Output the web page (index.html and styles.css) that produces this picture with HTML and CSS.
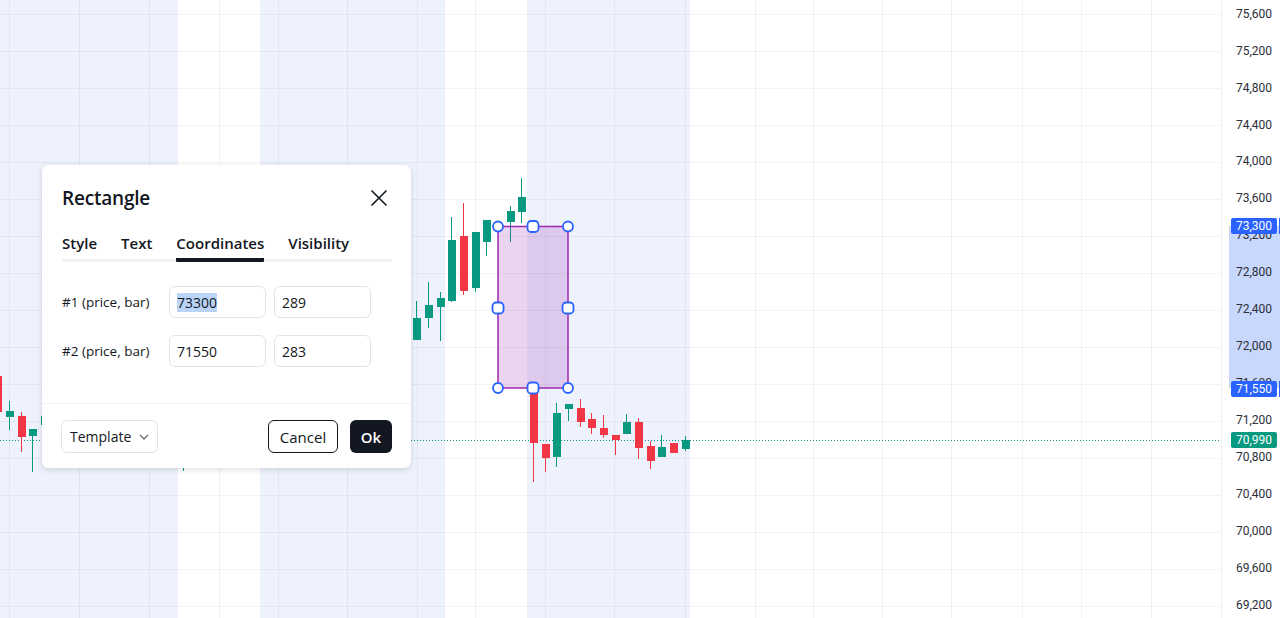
FILE: index.html
```html
<!DOCTYPE html>
<html>
<head>
<meta charset="utf-8">
<link rel="stylesheet" href="styles.css">
</head>
<body>
<div class="app">
  <div class="pane">
    <svg class="chart" width="1221" height="618" viewBox="0 0 1221 618">
      <g class="bands">
        <rect x="0" y="0" width="178" height="618"/>
        <rect x="260" y="0" width="185" height="618"/>
        <rect x="527" y="0" width="163" height="618"/>
      </g>
      <g class="grid">
        <line x1="9.5" y1="0" x2="9.5" y2="618"/>
        <line x1="79.5" y1="0" x2="79.5" y2="618"/>
        <line x1="149.5" y1="0" x2="149.5" y2="618"/>
        <line x1="219.5" y1="0" x2="219.5" y2="618"/>
        <line x1="278.5" y1="0" x2="278.5" y2="618"/>
        <line x1="347.5" y1="0" x2="347.5" y2="618"/>
        <line x1="417.5" y1="0" x2="417.5" y2="618"/>
        <line x1="475.5" y1="0" x2="475.5" y2="618"/>
        <line x1="545.5" y1="0" x2="545.5" y2="618"/>
        <line x1="614.5" y1="0" x2="614.5" y2="618"/>
        <line x1="685.5" y1="0" x2="685.5" y2="618"/>
        <line x1="755.5" y1="0" x2="755.5" y2="618"/>
        <line x1="813.5" y1="0" x2="813.5" y2="618"/>
        <line x1="882.5" y1="0" x2="882.5" y2="618"/>
        <line x1="951.5" y1="0" x2="951.5" y2="618"/>
        <line x1="1022.5" y1="0" x2="1022.5" y2="618"/>
        <line x1="1081.5" y1="0" x2="1081.5" y2="618"/>
        <line x1="1151.5" y1="0" x2="1151.5" y2="618"/>
        <line x1="0" y1="14.5" x2="1221" y2="14.5"/>
        <line x1="0" y1="51.5" x2="1221" y2="51.5"/>
        <line x1="0" y1="88.5" x2="1221" y2="88.5"/>
        <line x1="0" y1="125.5" x2="1221" y2="125.5"/>
        <line x1="0" y1="162.5" x2="1221" y2="162.5"/>
        <line x1="0" y1="199.5" x2="1221" y2="199.5"/>
        <line x1="0" y1="236.5" x2="1221" y2="236.5"/>
        <line x1="0" y1="273.5" x2="1221" y2="273.5"/>
        <line x1="0" y1="310.5" x2="1221" y2="310.5"/>
        <line x1="0" y1="347.5" x2="1221" y2="347.5"/>
        <line x1="0" y1="384.5" x2="1221" y2="384.5"/>
        <line x1="0" y1="421.5" x2="1221" y2="421.5"/>
        <line x1="0" y1="458.5" x2="1221" y2="458.5"/>
        <line x1="0" y1="495.5" x2="1221" y2="495.5"/>
        <line x1="0" y1="532.5" x2="1221" y2="532.5"/>
        <line x1="0" y1="569.5" x2="1221" y2="569.5"/>
        <line x1="0" y1="606.5" x2="1221" y2="606.5"/>
      </g>
      <line class="last-price" x1="0" y1="440.5" x2="1221" y2="440.5"/>
      <g class="up">
        <line x1="9.5" y1="401" x2="9.5" y2="430"/><rect x="6" y="411" width="8" height="6"/>
        <line x1="32.5" y1="429" x2="32.5" y2="472"/><rect x="29" y="429" width="8" height="7"/>
        <line x1="44.5" y1="410" x2="44.5" y2="430"/><rect x="41" y="416" width="8" height="9"/>
        <line x1="183.5" y1="450" x2="183.5" y2="471"/><rect x="180" y="440" width="8" height="14"/>
        <line x1="416.5" y1="301" x2="416.5" y2="340"/><rect x="413" y="318" width="8" height="22"/>
        <line x1="428.5" y1="282" x2="428.5" y2="328"/><rect x="425" y="305" width="8" height="13"/>
        <line x1="440.5" y1="292" x2="440.5" y2="341"/><rect x="437" y="298" width="8" height="9"/>
        <line x1="451.5" y1="217" x2="451.5" y2="302"/><rect x="448" y="240" width="8" height="61"/>
        <line x1="475.5" y1="232" x2="475.5" y2="292"/><rect x="472" y="232" width="8" height="56"/>
        <line x1="486.5" y1="220" x2="486.5" y2="256"/><rect x="483" y="220" width="8" height="22"/>
        <line x1="510.5" y1="206" x2="510.5" y2="242"/><rect x="507" y="211" width="8" height="11"/>
        <line x1="521.5" y1="178" x2="521.5" y2="223"/><rect x="518" y="197" width="8" height="15"/>
        <line x1="556.5" y1="403" x2="556.5" y2="467"/><rect x="553" y="413" width="8" height="44"/>
        <line x1="568.5" y1="404" x2="568.5" y2="421"/><rect x="565" y="404" width="8" height="5"/>
        <line x1="626.5" y1="414" x2="626.5" y2="434"/><rect x="623" y="422" width="8" height="12"/>
        <line x1="661.5" y1="435" x2="661.5" y2="457"/><rect x="658" y="447" width="8" height="10"/>
        <line x1="685.5" y1="436" x2="685.5" y2="451"/><rect x="682" y="440" width="8" height="9"/>
      </g>
      <g class="down">
        <rect x="-6" y="376" width="8" height="36"/>
        <line x1="21.5" y1="412" x2="21.5" y2="452"/><rect x="18" y="416" width="8" height="21"/>
        <line x1="463.5" y1="203" x2="463.5" y2="295"/><rect x="460" y="236" width="8" height="55"/>
        <line x1="533.5" y1="388" x2="533.5" y2="482"/><rect x="530" y="388" width="8" height="55"/>
        <line x1="545.5" y1="444" x2="545.5" y2="472"/><rect x="542" y="444" width="8" height="14"/>
        <line x1="580.5" y1="399" x2="580.5" y2="427"/><rect x="577" y="408" width="8" height="14"/>
        <line x1="591.5" y1="413" x2="591.5" y2="434"/><rect x="588" y="419" width="8" height="9"/>
        <line x1="603.5" y1="415" x2="603.5" y2="438"/><rect x="600" y="428" width="8" height="7"/>
        <line x1="615.5" y1="435" x2="615.5" y2="455"/><rect x="612" y="435" width="8" height="5"/>
        <line x1="638.5" y1="418" x2="638.5" y2="459"/><rect x="635" y="422" width="8" height="26"/>
        <line x1="650.5" y1="441" x2="650.5" y2="469"/><rect x="647" y="446" width="8" height="15"/>
        <rect x="670" y="443" width="8" height="10"/>
      </g>
      <rect class="shape" x="498" y="226.5" width="70" height="161.5"/>
      <g class="handles">
        <circle cx="498" cy="226.5" r="5"/>
        <rect x="527.5" y="221" width="11" height="11" rx="3.5"/>
        <circle cx="568" cy="226.5" r="5"/>
        <rect x="492.5" y="302.5" width="11" height="11" rx="3.5"/>
        <rect x="562.5" y="302.5" width="11" height="11" rx="3.5"/>
        <circle cx="498" cy="388" r="5"/>
        <rect x="527.5" y="382.5" width="11" height="11" rx="3.5"/>
        <circle cx="568" cy="388" r="5"/>
      </g>
    </svg>

    <div class="dialog">
      <div class="dialog-head">
        <h2 class="dialog-title">Rectangle</h2>
        <button class="close" aria-label="Close">
          <svg width="18" height="18" viewBox="0 0 18 18"><path d="M1.5 1.5 L16.5 16.5 M16.5 1.5 L1.5 16.5"/></svg>
        </button>
      </div>
      <div class="tabs">
        <div class="tab">Style</div>
        <div class="tab">Text</div>
        <div class="tab active">Coordinates</div>
        <div class="tab">Visibility</div>
      </div>
      <div class="dialog-body">
        <div class="row">
          <div class="row-label">#1 (price, bar)</div>
          <div class="field"><span class="selected">73300</span></div>
          <div class="field">289</div>
        </div>
        <div class="row">
          <div class="row-label">#2 (price, bar)</div>
          <div class="field">71550</div>
          <div class="field">283</div>
        </div>
      </div>
      <div class="dialog-foot">
        <div class="select">Template
          <svg width="10" height="6" viewBox="0 0 10 6"><path d="M1 1 L5 5 L9 1"/></svg>
        </div>
        <div class="actions">
          <button class="btn btn-cancel">Cancel</button>
          <button class="btn btn-ok">Ok</button>
        </div>
      </div>
    </div>
  </div>

  <div class="axis">
    <svg width="59" height="618" viewBox="0 0 59 618">
      <rect class="range" x="8" y="226" width="51" height="162"/>
      <g class="ticks">
        <text x="51" y="14">75,600</text>
        <text x="51" y="51">75,200</text>
        <text x="51" y="88">74,800</text>
        <text x="51" y="125">74,400</text>
        <text x="51" y="161">74,000</text>
        <text x="51" y="198">73,600</text>
        <text x="51" y="235">73,200</text>
        <text x="51" y="272">72,800</text>
        <text x="51" y="309">72,400</text>
        <text x="51" y="346">72,000</text>
        <text x="51" y="383">71,600</text>
        <text x="51" y="420">71,200</text>
        <text x="51" y="457">70,800</text>
        <text x="51" y="494">70,400</text>
        <text x="51" y="531">70,000</text>
        <text x="51" y="568">69,600</text>
        <text x="51" y="605">69,200</text>
      </g>
      <g class="tag blue">
        <rect x="10" y="218" width="46" height="16" rx="2"/>
        <rect x="58" y="218" width="2" height="16"/>
        <text x="51" y="226">73,300</text>
      </g>
      <g class="tag blue">
        <rect x="10" y="381" width="46" height="16" rx="2"/>
        <rect x="58" y="381" width="2" height="16"/>
        <text x="51" y="389">71,550</text>
      </g>
      <g class="tag green">
        <rect x="10" y="432" width="46" height="16" rx="2"/>
        <text x="51" y="440">70,990</text>
      </g>
    </svg>
  </div>
</div>
</body>
</html>
```

FILE: styles.css
```css
* { box-sizing: border-box; }
html, body { margin: 0; padding: 0; background: #ffffff; }
body { font-family: "Open Sans", "Noto Sans", sans-serif; color: #131722; }

.app { display: flex; width: 1280px; height: 618px; overflow: hidden; }
.pane { position: relative; width: 1221px; height: 618px; }
.chart { display: block; }

.bands rect { fill: #eef2fd; }
.grid line { stroke: rgba(42, 46, 57, 0.06); stroke-width: 1; }
.last-price { stroke: #089981; stroke-width: 1; stroke-dasharray: 1 2; }
.up line { stroke: #089981; stroke-width: 1; }
.up rect { fill: #089981; }
.down line { stroke: #f23645; stroke-width: 1; }
.down rect { fill: #f23645; }
.shape { fill: rgba(156, 39, 176, 0.2); stroke: #9c27b0; stroke-width: 1.5; }
.handles circle, .handles rect { fill: #ffffff; stroke: #2962ff; stroke-width: 1.8; }

.axis { width: 59px; height: 618px; border-left: 1px solid #f0f1f4; }
.axis svg { display: block; margin-left: -1px; }
.range { fill: #c8d7fc; }
.ticks text { font-family: Roboto, "Liberation Sans", sans-serif; font-size: 12px; fill: #2a2e39; text-anchor: end; dominant-baseline: central; }
.tag text { font-family: Roboto, "Liberation Sans", sans-serif; font-size: 12px; fill: #ffffff; text-anchor: end; dominant-baseline: central; }
.tag.blue rect { fill: #2962ff; }
.tag.green rect { fill: #089981; }

.dialog {
  position: absolute; left: 42px; top: 165px; width: 369px; height: 303px;
  background: #ffffff; border-radius: 6px;
  box-shadow: 0 2px 6px rgba(0, 0, 0, 0.12), 0 0 1px rgba(0, 0, 0, 0.12);
  display: flex; flex-direction: column;
}
.dialog-head { display: flex; align-items: center; justify-content: space-between; padding: 21px 23px 0 20px; height: 45px; }
.dialog-title { margin: 0; font-size: 19px; font-weight: 600; line-height: 24px; letter-spacing: -0.2px; }
.close { border: 0; background: none; padding: 0; width: 18px; height: 18px; display: flex; }
.close svg path { stroke: #131722; stroke-width: 1.6; fill: none; }

.tabs { display: flex; gap: 24px; margin: 23px 19px 0 20px; box-shadow: inset 0 -3px 0 #f0f2f5; }
.tab { font-size: 15px; font-weight: 600; line-height: 20px; padding-bottom: 5px; border-bottom: 4px solid transparent; letter-spacing: 0; }
.tab.active { border-bottom-color: #131722; border-radius: 0 0 1px 1px; }

.dialog-body { display: flex; flex-direction: column; gap: 17px; padding: 24px 20px 36px 20px; border-bottom: 1px solid #f0f2f5; }
.row { display: flex; align-items: center; gap: 8px; }
.row-label { width: 99px; font-size: 13.5px; line-height: 20px; }
.field { width: 97px; height: 32px; border: 1px solid #e0e3eb; border-radius: 6px; padding: 0 7px; display: flex; align-items: center; font-size: 14px; }
.selected { background: #b9d4f7; }

.dialog-foot { display: flex; align-items: center; justify-content: space-between; padding: 16px 19px 15px 19px; }
.select { width: 97px; height: 33px; border: 1px solid #e0e3eb; border-radius: 6px; display: flex; align-items: center; justify-content: space-between; padding: 0 8px 0 8px; font-size: 14px; }
.select svg path { stroke: #6a6d78; stroke-width: 1.3; fill: none; }
.actions { display: flex; gap: 12px; }
.btn { height: 33px; border-radius: 6px; font-family: inherit; font-size: 15px; padding: 0; display: flex; align-items: center; justify-content: center; }
.btn-cancel { width: 70px; border: 1px solid #131722; background: #ffffff; color: #131722; }
.btn-ok { width: 42px; border: 0; background: #131722; color: #ffffff; font-weight: 600; }
```
